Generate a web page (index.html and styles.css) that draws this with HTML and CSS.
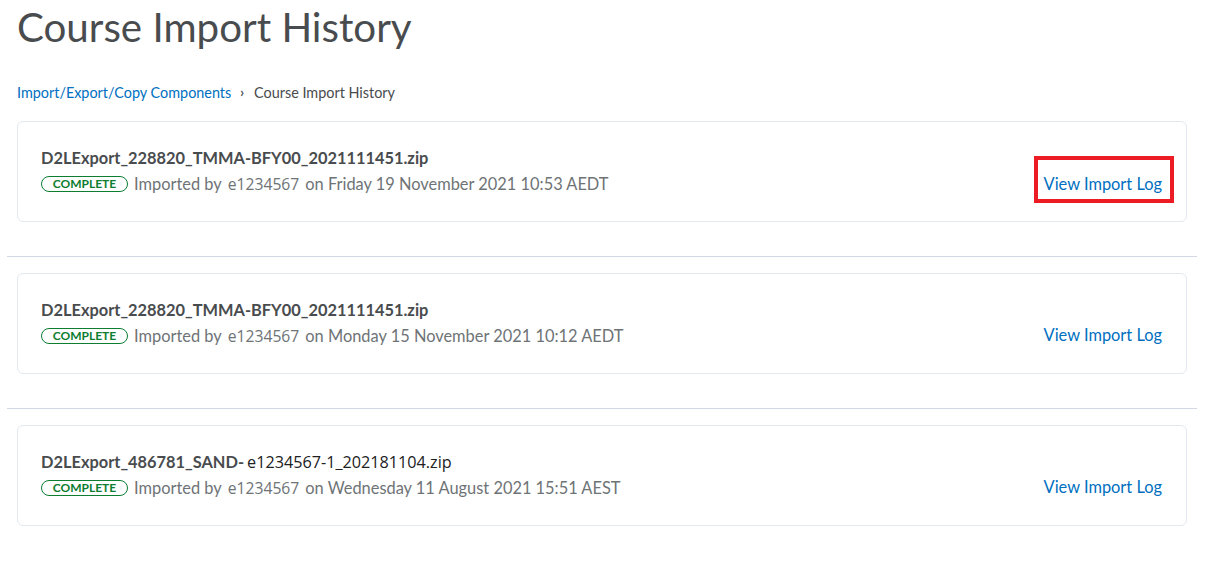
FILE: index.html
```html
<!DOCTYPE html>
<html lang="en">
<head>
<meta charset="utf-8">
<title>Course Import History</title>
<link rel="stylesheet" href="styles.css">
</head>
<body>
<div class="page">
  <header class="head">
    <h1 class="title">Course Import History</h1>
    <nav class="crumbs">
      <a href="#" class="crumb-link">Import/Export/Copy Components</a>
      <span class="crumb-sep">&#8250;</span>
      <span class="crumb-current">Course Import History</span>
    </nav>
  </header>

  <ul class="list">
    <li class="item">
      <div class="card">
        <div class="info">
          <div class="file">D2LExport_228820_TMMA-BFY00_2021111451.zip</div>
          <div class="meta">
            <span class="badge">COMPLETE</span>
            <span>Imported by</span>
            <span class="user">e1234567</span>
            <span>on Friday 19 November 2021 10:53 AEDT</span>
          </div>
        </div>
        <a href="#" class="log log-highlight">View Import Log</a>
      </div>
    </li>
    <li class="item">
      <div class="card">
        <div class="info">
          <div class="file">D2LExport_228820_TMMA-BFY00_2021111451.zip</div>
          <div class="meta">
            <span class="badge">COMPLETE</span>
            <span>Imported by</span>
            <span class="user">e1234567</span>
            <span>on Monday 15 November 2021 10:12 AEDT</span>
          </div>
        </div>
        <a href="#" class="log">View Import Log</a>
      </div>
    </li>
    <li class="item">
      <div class="card">
        <div class="info">
          <div class="file">D2LExport_486781_SAND-<span class="file-user">e1234567-1_202181104.zip</span></div>
          <div class="meta">
            <span class="badge">COMPLETE</span>
            <span>Imported by</span>
            <span class="user">e1234567</span>
            <span>on Wednesday 11 August 2021 15:51 AEST</span>
          </div>
        </div>
        <a href="#" class="log">View Import Log</a>
      </div>
    </li>
  </ul>
</div>
</body>
</html>
```

FILE: styles.css
```css
* { box-sizing: border-box; }

html, body {
  margin: 0;
  padding: 0;
  background: #ffffff;
}

body {
  font-family: Lato, "Open Sans", sans-serif;
  color: #494c4e;
}

.page {
  width: 1212px;
  padding: 0 15px 0 7px;
}

.head {
  padding-left: 10px;
}

.title {
  margin: 0;
  padding-top: 2px;
  font-size: 40.3px;
  font-weight: 400;
  line-height: 50px;
  color: #494c4e;
}

.crumbs {
  display: flex;
  align-items: center;
  margin-top: 30px;
  height: 20px;
  font-size: 14.4px;
}

.crumb-link {
  color: #006fbf;
  text-decoration: none;
}

.crumb-sep {
  margin: 0 10px 0 9px;
  font-size: 13px;
  color: #494c4e;
  font-weight: 700;
}

.crumb-current {
  color: #494c4e;
}

.list {
  list-style: none;
  margin: 19px 0 0;
  padding: 0;
}

.item {
  padding: 0 10px;
}

.item + .item {
  border-top: 1px solid #d3d9e3;
  margin-top: 34px;
  padding-top: 16px;
}

.card {
  display: flex;
  align-items: flex-end;
  justify-content: space-between;
  height: 101px;
  border: 1px solid #e3e9f1;
  border-radius: 6px;
  padding: 24px 24px 0 23px;
}

.info {
  align-self: flex-start;
}

.file {
  font-size: 16.4px;
  font-weight: 700;
  line-height: 24px;
  color: #494c4e;
}

.file-user {
  margin-left: 3px;
  font-family: "Open Sans", sans-serif;
  font-weight: 400;
  font-size: 16.2px;
  color: #202122;
}

.meta {
  display: flex;
  align-items: center;
  gap: 6px;
  margin-top: 2px;
  font-size: 16.4px;
  line-height: 24px;
  color: #6e7376;
}

.badge {
  display: inline-flex;
  align-items: center;
  justify-content: center;
  height: 16px;
  width: 87px;
  border: 1px solid #0c7d31;
  border-radius: 8px;
  font-size: 12px;
  font-weight: 700;
  color: #0c7d31;
  line-height: 1;
}

.user {
  font-family: "Open Sans", sans-serif;
  font-size: 15.7px;
  color: #6e7376;
}

.log {
  margin-bottom: 26px;
  font-size: 16.4px;
  line-height: 24px;
  color: #006fbf;
  text-decoration: none;
}

.log-highlight {
  margin-right: -12px;
  margin-bottom: 18px;
  padding: 12px 8px 3px 6px;
  border: 4px solid #ed1c24;
}
```
